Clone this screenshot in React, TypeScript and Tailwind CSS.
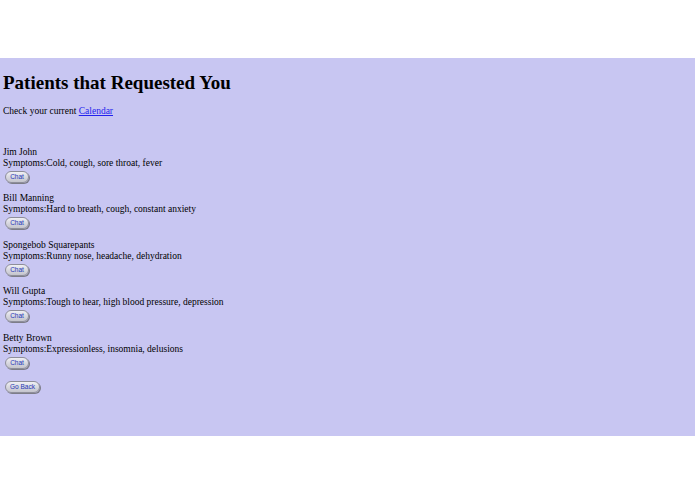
const patients = [
  { name: "Jim John", symptoms: "Cold, cough, sore throat, fever" },
  { name: "Bill Manning", symptoms: "Hard to breath, cough, constant anxiety" },
  { name: "Spongebob Squarepants", symptoms: "Runny nose, headache, dehydration" },
  { name: "Will Gupta", symptoms: "Tough to hear, high blood pressure, depression" },
  { name: "Betty Brown", symptoms: "Expressionless, insomnia, delusions" },
]

const PillButton = ({ label, width }: { label: string; width: string }) => (
  <button
    className={`${width} h-[12px] rounded-full border border-[#8e8e9a] bg-gradient-to-b from-[#f0f0f4] via-[#d8d8e0] to-[#c4c4cc] shadow-[1px_1px_0_#7d7d88] font-['Liberation_Sans',sans-serif] text-[6.5px] leading-[10px] text-[#2438b8] flex items-center justify-center`}
  >
    {label}
  </button>
)

export default function App() {
  return (
    <div className="w-[695px] h-[494px] bg-white font-['Liberation_Serif',serif] text-black">
      <div className="h-[58px]" />
      <div className="h-[378px] bg-[#c8c6f2] px-[3px] pt-[12.5px]">
        <h1 className="text-[19px] leading-[23px] font-bold">Patients that Requested You</h1>
        <p className="mt-[12px] text-[9.5px] leading-[11px]">
          Check your current{" "}
          <a href="#" className="text-[#2222ee] underline">Calendar</a>
        </p>
        <div className="mt-[30px] flex flex-col">
          {patients.map((p) => (
            <div key={p.name} className="pb-[10.5px] text-[9.5px] leading-[11px]">
              <div>{p.name}</div>
              <div>Symptoms:{p.symptoms}</div>
              <div className="mt-[2px] pl-[2px]">
                <PillButton label="Chat" width="w-[24px]" />
              </div>
            </div>
          ))}
        </div>
        <div className="mt-[1.5px] pl-[2px]">
          <PillButton label="Go Back" width="w-[35px]" />
        </div>
      </div>
    </div>
  )
}
